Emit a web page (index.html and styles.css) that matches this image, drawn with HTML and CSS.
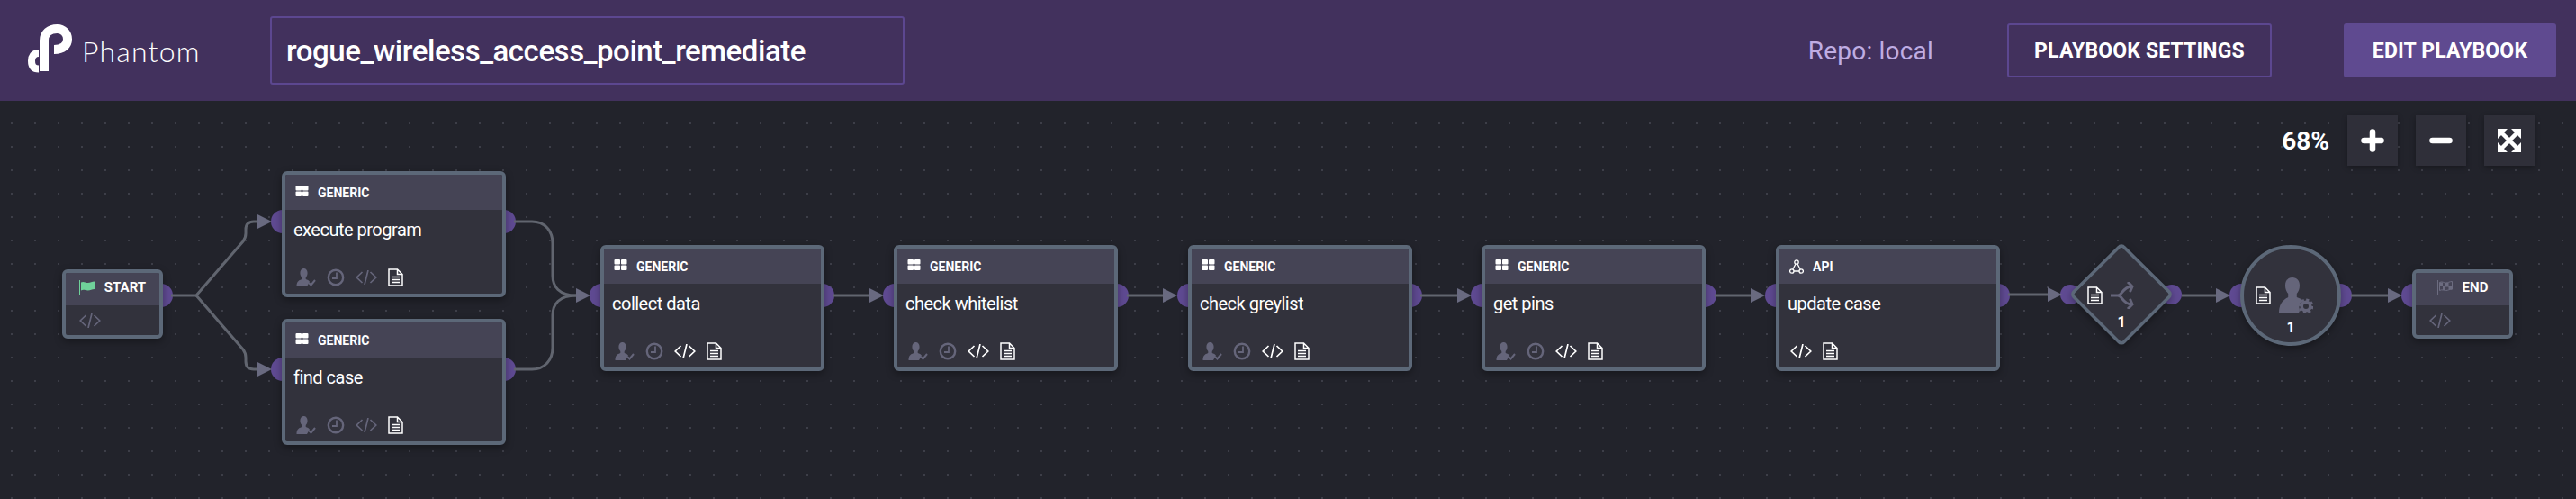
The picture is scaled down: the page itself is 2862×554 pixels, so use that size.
FILE: index.html
```html
<!DOCTYPE html>
<html lang="en">
<head>
    <meta charset="UTF-8">
    <meta name="viewport" content="width=device-width, initial-scale=1.0">
    <title>rogue_wireless_access_point_remediate | Phantom</title>
    <link rel="stylesheet" href="styles.css">
</head>
<body>
    <!-- shared icons -->
    <svg class="icon-defs" aria-hidden="true">
        <symbol id="i-user" viewBox="0 0 22 20">
            <path fill="currentColor" d="M8.5 0C11 0 12.6 2 12.6 5c0 2.2-.9 4-1.9 5v2c1.8.6 3.4 1.4 4.3 2.8L12 20H.5C.5 16 1.5 13.6 6.3 12v-2C5.3 9 4.4 7.2 4.4 5 4.4 2 6 0 8.5 0z"/>
            <path fill="none" stroke="currentColor" stroke-width="2" d="M14 16l2.5 2.5L21 13"/>
        </symbol>
        <symbol id="i-clock" viewBox="0 0 20 20">
            <circle cx="10" cy="10" r="8.2" fill="none" stroke="currentColor" stroke-width="2.4"/>
            <path fill="none" stroke="currentColor" stroke-width="1.8" d="M11 4.5V11H6"/>
        </symbol>
        <symbol id="i-code" viewBox="0 0 24 16">
            <path fill="none" stroke="currentColor" stroke-width="1.7" d="M7.5 2L1.2 8l6.3 6M16.5 2l6.3 6-6.3 6M14 0l-4 16"/>
        </symbol>
        <symbol id="i-doc" viewBox="0 0 17 20">
            <path fill="none" stroke="currentColor" stroke-width="1.5" d="M1 1h9.5L16 6.5V19H1zM10.5 1v5.5H16"/>
            <path fill="none" stroke="currentColor" stroke-width="1.5" d="M4 9.5h9M4 12.5h9M4 15.5h9"/>
        </symbol>
        <symbol id="i-grid" viewBox="0 0 14 12">
            <rect x="0" y="0" width="6.5" height="5.5" rx="1" fill="currentColor"/>
            <rect x="7.5" y="0" width="6.5" height="5.5" rx="1" fill="currentColor"/>
            <rect x="0" y="6.5" width="6.5" height="5.5" rx="1" fill="currentColor"/>
            <rect x="7.5" y="6.5" width="6.5" height="5.5" rx="1" fill="currentColor"/>
        </symbol>
        <symbol id="i-api" viewBox="0 0 16 16">
            <g fill="none" stroke="currentColor" stroke-width="1.3">
                <circle cx="8" cy="3" r="2.2"/>
                <circle cx="2.8" cy="13" r="2.2"/>
                <circle cx="13.2" cy="13" r="2.2"/>
                <path d="M7 5L3.8 11M9 5l3.2 6M5 13h6"/>
            </g>
        </symbol>
        <symbol id="i-flag" viewBox="0 0 18 16">
            <rect x="0" y="0" width="1" height="16" fill="currentColor"/>
            <path fill="currentColor" d="M2 2.5c3-1.5 4.5.5 7.5.5S14 1.5 17 1.5V10c-3 0-4.5 1.5-7.5 1.5S5 10 2 11.5z"/>
        </symbol>
        <symbol id="i-flag-end" viewBox="0 0 18 16">
            <rect x="0" y="0" width="1" height="16" fill="currentColor"/>
            <path fill="none" stroke="currentColor" stroke-width="1" d="M2.5 2.5c3-1.5 4.5.5 7 .5s4-1.500 7-1.500V10c-3 0-4.500 1.500-7 1.500s-4-1.500-7 0z"/>
            <path fill="currentColor" d="M2.5 2.5H6V7H2.5zM9 3h3.5v4.500H9zM6 7h3v4H6zM12.5 7h4v3.500h-4z"/>
        </symbol>
        <symbol id="i-merge" viewBox="0 0 28 30">
            <path fill="none" stroke="currentColor" stroke-width="3" d="M0 15h8c5 0 5-9 15-10M8 15c5 0 5 9 15 10M19 0l5 5-2.5 6M19 30l5-5-2.5-6"/>
        </symbol>
        <symbol id="i-user-gear" viewBox="0 0 38 40">
            <path fill="currentColor" d="M15 0c5 0 8 3.5 8 9 0 4-1.4 7-3.2 9v4c2.6.8 5 1.8 6.6 3.4-3.4 2-5 7-3.400 11.6-.4.8-1 2-1.4 3H0c0-9 3-14 10.2-18v-4C8.4 16 7 13 7 9c0-5.5 3-9 8-9z"/>
            <circle cx="30" cy="32" r="4.8" fill="none" stroke="currentColor" stroke-width="3.6"/>
            <circle cx="30" cy="32" r="7.2" fill="none" stroke="currentColor" stroke-width="2.4" stroke-dasharray="3.2 2.45"/>
        </symbol>
    </svg>

    <header class="topbar">
        <div class="brand">
            <svg class="brand-mark" viewBox="28 26 56 60" aria-hidden="true">
                <path fill="none" stroke="#fff" stroke-width="10" d="M49 79V45C49 37 55 32 63.5 32C70 32 75 37 75 43.5C75 50 70 55 60 55"/>
                <path fill="none" stroke="#fff" stroke-width="8" d="M43 59C37 59 35 63 35 67.5C35 73 37 76.5 43 76.5"/>
            </svg>
            <span class="brand-name">Phantom</span>
        </div>
        <div class="playbook-name">rogue_wireless_access_point_remediate</div>
        <div class="repo">Repo: local</div>
        <button class="btn btn-outline">PLAYBOOK SETTINGS</button>
        <button class="btn btn-solid">EDIT PLAYBOOK</button>
    </header>

    <main class="canvas">
        <svg class="edges" viewBox="0 112 2862 442" aria-hidden="true">
            <g class="ports">
                <circle cx="179" cy="328" r="13"/>
                <circle cx="314" cy="246" r="13"/>
                <circle cx="560" cy="246" r="13"/>
                <circle cx="314" cy="410" r="13"/>
                <circle cx="560" cy="410" r="13"/>
                <circle cx="668" cy="328" r="13"/>
                <circle cx="914" cy="328" r="13"/>
                <circle cx="994" cy="328" r="13"/>
                <circle cx="1241" cy="328" r="13"/>
                <circle cx="1321" cy="328" r="13"/>
                <circle cx="1567" cy="328" r="13"/>
                <circle cx="1647" cy="328" r="13"/>
                <circle cx="1894" cy="328" r="13"/>
                <circle cx="1974" cy="328" r="13"/>
                <circle cx="2220" cy="328" r="13"/>
                <circle cx="2300" cy="327" r="11"/>
                <circle cx="2413" cy="327" r="11"/>
                <circle cx="2490" cy="328" r="13"/>
                <circle cx="2600" cy="328" r="13"/>
                <circle cx="2681" cy="328" r="13"/>
            </g>
            <g class="lines">
                <path d="M190 328h28L270 268q3-4 3-9v-4q0-9 9-9h6"/>
                <path d="M218 328L270 388q3 4 3 9v4q0 9 9 9h6"/>
                <path d="M571 246h20c14 0 23 10 23 24v36c0 12 7 22 26 22"/>
                <path d="M571 410h20c14 0 23-10 23-24v-36c0-12 7-22 26-22"/>
                <path d="M925 328h42M1252 328h42M1578 328h42M1905 328h42M2231 327h45M2424 328h40M2612 328h42"/>
            </g>
            <g class="arrows">
                <path d="M286 238l16 8-16 8z"/>
                <path d="M286 402l16 8-16 8z"/>
                <path d="M640 320l16 8-16 8z"/>
                <path d="M966 320l16 8-16 8z"/>
                <path d="M1292 320l16 8-16 8z"/>
                <path d="M1619 320l16 8-16 8z"/>
                <path d="M1945 320l16 8-16 8z"/>
                <path d="M2275 319l16 8-16 8z"/>
                <path d="M2462 320l16 8-16 8z"/>
                <path d="M2653 320l16 8-16 8z"/>
            </g>
        </svg>

        <div class="node node-small pos-start">
            <div class="node-head">
                <svg class="ico-flag flag-start"><use href="#i-flag"/></svg>
                <span class="node-type">START</span>
            </div>
            <div class="node-foot">
                <svg class="ico-code dim"><use href="#i-code"/></svg>
            </div>
        </div>

        <div class="node pos-exec">
            <div class="node-head">
                <svg class="ico-grid"><use href="#i-grid"/></svg>
                <span class="node-type">GENERIC</span>
            </div>
            <div class="node-body">
                <div class="node-name">execute program</div>
                <div class="node-icons">
                    <svg class="ico-user dim"><use href="#i-user"/></svg>
                    <svg class="ico-clock dim"><use href="#i-clock"/></svg>
                    <svg class="ico-code dim"><use href="#i-code"/></svg>
                    <svg class="ico-doc"><use href="#i-doc"/></svg>
                </div>
            </div>
        </div>

        <div class="node pos-find">
            <div class="node-head">
                <svg class="ico-grid"><use href="#i-grid"/></svg>
                <span class="node-type">GENERIC</span>
            </div>
            <div class="node-body">
                <div class="node-name">find case</div>
                <div class="node-icons">
                    <svg class="ico-user dim"><use href="#i-user"/></svg>
                    <svg class="ico-clock dim"><use href="#i-clock"/></svg>
                    <svg class="ico-code dim"><use href="#i-code"/></svg>
                    <svg class="ico-doc"><use href="#i-doc"/></svg>
                </div>
            </div>
        </div>

        <div class="node pos-collect">
            <div class="node-head">
                <svg class="ico-grid"><use href="#i-grid"/></svg>
                <span class="node-type">GENERIC</span>
            </div>
            <div class="node-body">
                <div class="node-name">collect data</div>
                <div class="node-icons">
                    <svg class="ico-user dim"><use href="#i-user"/></svg>
                    <svg class="ico-clock dim"><use href="#i-clock"/></svg>
                    <svg class="ico-code"><use href="#i-code"/></svg>
                    <svg class="ico-doc"><use href="#i-doc"/></svg>
                </div>
            </div>
        </div>

        <div class="node pos-white">
            <div class="node-head">
                <svg class="ico-grid"><use href="#i-grid"/></svg>
                <span class="node-type">GENERIC</span>
            </div>
            <div class="node-body">
                <div class="node-name">check whitelist</div>
                <div class="node-icons">
                    <svg class="ico-user dim"><use href="#i-user"/></svg>
                    <svg class="ico-clock dim"><use href="#i-clock"/></svg>
                    <svg class="ico-code"><use href="#i-code"/></svg>
                    <svg class="ico-doc"><use href="#i-doc"/></svg>
                </div>
            </div>
        </div>

        <div class="node pos-grey">
            <div class="node-head">
                <svg class="ico-grid"><use href="#i-grid"/></svg>
                <span class="node-type">GENERIC</span>
            </div>
            <div class="node-body">
                <div class="node-name">check greylist</div>
                <div class="node-icons">
                    <svg class="ico-user dim"><use href="#i-user"/></svg>
                    <svg class="ico-clock dim"><use href="#i-clock"/></svg>
                    <svg class="ico-code"><use href="#i-code"/></svg>
                    <svg class="ico-doc"><use href="#i-doc"/></svg>
                </div>
            </div>
        </div>

        <div class="node pos-pins">
            <div class="node-head">
                <svg class="ico-grid"><use href="#i-grid"/></svg>
                <span class="node-type">GENERIC</span>
            </div>
            <div class="node-body">
                <div class="node-name">get pins</div>
                <div class="node-icons">
                    <svg class="ico-user dim"><use href="#i-user"/></svg>
                    <svg class="ico-clock dim"><use href="#i-clock"/></svg>
                    <svg class="ico-code"><use href="#i-code"/></svg>
                    <svg class="ico-doc"><use href="#i-doc"/></svg>
                </div>
            </div>
        </div>

        <div class="node pos-update">
            <div class="node-head">
                <svg class="ico-api"><use href="#i-api"/></svg>
                <span class="node-type">API</span>
            </div>
            <div class="node-body">
                <div class="node-name">update case</div>
                <div class="node-icons">
                    <svg class="ico-code"><use href="#i-code"/></svg>
                    <svg class="ico-doc"><use href="#i-doc"/></svg>
                </div>
            </div>
        </div>

        <div class="decision">
            <svg class="decision-shape" viewBox="0 0 114 114" aria-hidden="true">
                <path d="M57 3a4 4 0 0 1 3 1.5L110 54a4 4 0 0 1 0 5.500L60 109.500a4 4 0 0 1-6 0L4 59.500A4 4 0 0 1 4 54L54 4.500A4 4 0 0 1 57 3z"/>
            </svg>
            <div class="shape-icons">
                <svg class="ico-doc"><use href="#i-doc"/></svg>
                <svg class="ico-merge dim"><use href="#i-merge"/></svg>
            </div>
            <div class="shape-count">1</div>
        </div>

        <div class="prompt">
            <div class="shape-icons">
                <svg class="ico-doc"><use href="#i-doc"/></svg>
                <svg class="ico-user-gear dim"><use href="#i-user-gear"/></svg>
            </div>
            <div class="shape-count">1</div>
        </div>

        <div class="node node-small pos-end">
            <div class="node-head">
                <svg class="ico-flag flag-end"><use href="#i-flag-end"/></svg>
                <span class="node-type">END</span>
            </div>
            <div class="node-foot">
                <svg class="ico-code dim"><use href="#i-code"/></svg>
            </div>
        </div>

        <div class="zoom-bar">
            <span class="zoom-value">68%</span>
            <button class="zoom-btn" aria-label="Zoom in">
                <svg viewBox="0 0 28 28"><path d="M14 4.5v19M4.5 14h19"/></svg>
            </button>
            <button class="zoom-btn" aria-label="Zoom out">
                <svg viewBox="0 0 28 28"><path d="M4.5 14h19"/></svg>
            </button>
            <button class="zoom-btn" aria-label="Fit to screen">
                <svg class="fit" viewBox="0 0 28 28"><path d="M6 6l16 16M22 6L6 22"/><path class="fit-tip" d="M1 1h11L1 12zM27 1v11L16 1zM1 27V16l11 11zM27 27H16l11-11z"/></svg>
            </button>
        </div>
    </main>
</body>
</html>
```

FILE: styles.css
```css
* {
    box-sizing: border-box;
}

body {
    margin: 0;
    height: 100vh;
    display: flex;
    flex-direction: column;
    overflow: hidden;
    font-family: Roboto, "Liberation Sans", sans-serif;
    background: #22232b;
    color: #fff;
}

.icon-defs {
    position: absolute;
    width: 0;
    height: 0;
}

/* top bar */
.topbar {
    height: 112px;
    flex: none;
    display: flex;
    align-items: center;
    padding: 0 22px 0 28px;
    background: #42315d;
}

.brand {
    width: 272px;
    display: flex;
    align-items: center;
    gap: 7px;
}

.brand-mark {
    width: 56px;
    height: 60px;
    flex: none;
}

.brand-name {
    font-family: Lato, sans-serif;
    font-size: 32px;
    font-weight: 300;
    letter-spacing: 1.2px;
}

.playbook-name {
    width: 705px;
    height: 76px;
    display: flex;
    align-items: center;
    padding-left: 16px;
    border: 2px solid #5c4790;
    border-radius: 3px;
    font-size: 33px;
    font-weight: 500;
    letter-spacing: -0.45px;
}

.repo {
    margin-left: auto;
    margin-right: 82px;
    font-size: 28px;
    letter-spacing: 0.2px;
    color: #bfade3;
}

.btn {
    height: 60px;
    font-family: Roboto, sans-serif;
    font-size: 23px;
    font-weight: 700;
    letter-spacing: 0.15px;
    color: #fff;
    border-radius: 3px;
    padding: 0;
}

.btn-outline {
    width: 294px;
    margin-right: 80px;
    background: none;
    border: 2px solid #5c4790;
}

.btn-solid {
    width: 236px;
    background: #5f4a90;
    border: none;
}

/* canvas */
.canvas {
    flex: 1;
    position: relative;
    background-color: #22232b;
    background-image: radial-gradient(circle, #3d3e48 1px, transparent 1.3px);
    background-size: 26px 26px;
    background-position: 0 12px;
}

.edges {
    position: absolute;
    left: 0;
    top: 0;
    width: 2862px;
    height: 442px;
}

.ports circle {
    fill: #5f4a92;
}

.lines path {
    fill: none;
    stroke: #61656f;
    stroke-width: 3;
}

.arrows path {
    fill: #696a80;
}

/* nodes */
.node {
    position: absolute;
    width: 249px;
    height: 140px;
    display: flex;
    flex-direction: column;
    background: #32323c;
    border: 4px solid #5c6878;
    border-radius: 6px;
    box-shadow: 0 3px 8px rgba(0, 0, 0, 0.35);
    overflow: hidden;
}

.node-small {
    width: 112px;
    height: 77px;
}

.node-head {
    height: 39px;
    flex: none;
    display: flex;
    align-items: center;
    gap: 10px;
    padding-left: 11px;
    background: #454455;
}

.node-small .node-head {
    height: 36px;
    justify-content: center;
    padding: 0 0 5px;
}

.node-type {
    font-size: 14px;
    font-weight: 700;
}

.node-small .node-type {
    font-size: 15px;
}

.node-body {
    flex: 1;
    display: flex;
    flex-direction: column;
    justify-content: space-between;
    padding: 9px 9px 8px;
}

.node-foot {
    flex: 1;
    display: flex;
    align-items: center;
    padding-left: 15px;
}

.node-name {
    font-size: 20px;
    line-height: 26px;
    letter-spacing: -0.5px;
}

.node-icons {
    display: flex;
    align-items: center;
    gap: 12px;
    padding-left: 3px;
}

.dim {
    color: #65657a;
}

.ico-grid {
    width: 15px;
    height: 12px;
    margin-bottom: 3px;
    color: #fff;
}

.ico-api {
    width: 16px;
    height: 16px;
    color: #fff;
}

.ico-flag {
    width: 18px;
    height: 16px;
}

.flag-start {
    color: #6fd19a;
}

.flag-end {
    color: #6c6c80;
}

.ico-user {
    width: 22px;
    height: 20px;
}

.ico-clock {
    width: 20px;
    height: 20px;
}

.ico-code {
    width: 24px;
    height: 16px;
    color: #fff;
}

.ico-code.dim {
    color: #65657a;
}

.ico-doc {
    width: 17px;
    height: 20px;
    color: #fff;
}

.ico-merge {
    width: 28px;
    height: 30px;
}

.ico-user-gear {
    width: 38px;
    height: 40px;
}

/* node places on the canvas */
.pos-start { left: 69px; top: 187px; }
.pos-exec { left: 313px; top: 78px; }
.pos-find { left: 313px; top: 242px; }
.pos-collect { left: 667px; top: 160px; }
.pos-white { left: 993px; top: 160px; }
.pos-grey { left: 1320px; top: 160px; }
.pos-pins { left: 1646px; top: 160px; }
.pos-update { left: 1973px; top: 160px; }
.pos-end { left: 2680px; top: 187px; }

/* decision and prompt shapes */
.decision {
    position: absolute;
    left: 2300px;
    top: 158px;
    width: 114px;
    height: 114px;
    display: flex;
    flex-direction: column;
    align-items: center;
    padding-top: 43px;
}

.decision-shape {
    position: absolute;
    left: 0;
    top: 0;
    width: 114px;
    height: 114px;
    filter: drop-shadow(0 3px 4px rgba(0, 0, 0, 0.35));
}

.decision-shape path {
    fill: #32323c;
    stroke: #5c6878;
    stroke-width: 3.5;
}

.shape-icons {
    position: relative;
    display: flex;
    align-items: center;
    gap: 9px;
}

.decision .shape-icons {
    margin-right: 22px;
}

.prompt .shape-icons {
    margin-right: 14px;
}

.shape-count {
    position: relative;
    font-size: 16px;
    font-weight: 700;
    line-height: 20px;
}

.decision .shape-count {
    margin-top: 5px;
}

.prompt {
    position: absolute;
    left: 2489px;
    top: 160px;
    width: 112px;
    height: 112px;
    display: flex;
    flex-direction: column;
    align-items: center;
    padding-top: 32px;
    background: #32323c;
    border: 4px solid #5c6878;
    border-radius: 50%;
    box-shadow: 0 3px 8px rgba(0, 0, 0, 0.35);
}

.prompt .shape-count {
    margin-top: 6px;
}

/* zoom controls */
.zoom-bar {
    position: absolute;
    right: 46px;
    top: 16px;
    display: flex;
    align-items: center;
    gap: 20px;
}

.zoom-value {
    font-size: 28px;
    font-weight: 700;
}

.zoom-btn {
    width: 56px;
    height: 56px;
    display: flex;
    align-items: center;
    justify-content: center;
    padding: 0;
    border: none;
    background: #2f2f39;
    box-shadow: 0 2px 6px rgba(0, 0, 0, 0.3);
}

.zoom-btn svg {
    width: 28px;
    height: 28px;
}

.zoom-btn path {
    fill: none;
    stroke: #fff;
    stroke-width: 6.5;
    stroke-linecap: round;
}

.zoom-btn .fit path {
    stroke-width: 4.5;
    stroke-linecap: butt;
}

.zoom-btn .fit .fit-tip {
    fill: #fff;
    stroke: none;
}
```
